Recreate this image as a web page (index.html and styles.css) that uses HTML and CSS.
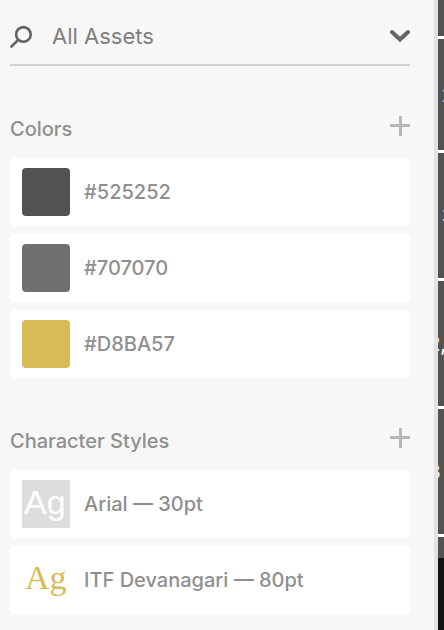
FILE: index.html
```html
<!DOCTYPE html>
<html lang="en">
<head>
<meta charset="utf-8">
<meta name="viewport" content="width=device-width, initial-scale=1">
<title>Assets</title>
<link rel="stylesheet" href="styles.css">
</head>
<body>
<div class="app">
  <aside class="panel">
    <div class="search">
      <svg class="search-icon" viewBox="0 0 24 24" aria-hidden="true"><circle cx="13.400" cy="10.400" r="7.300"/><path d="M8.200 15.800L1.500 22.500"/></svg>
      <input class="search-input" type="text" placeholder="All Assets" aria-label="Search assets">
      <button class="icon-button" type="button" aria-label="Filter assets"><svg class="chevron" viewBox="0 0 20 20" aria-hidden="true"><path d="M2 6L10 13.500L18 6"/></svg></button>
    </div>
    <section class="group">
      <header class="group-head">
        <h2 class="group-title">Colors</h2>
        <button class="icon-button" type="button" aria-label="Add color"><svg class="plus" viewBox="0 0 20 20" aria-hidden="true"><path d="M1 9.500H19M10.500 1V19"/></svg></button>
      </header>
      <ul class="list">
        <li class="item"><span class="swatch dark"></span><span>#525252</span></li>
        <li class="item"><span class="swatch gray"></span><span>#707070</span></li>
        <li class="item"><span class="swatch gold"></span><span>#D8BA57</span></li>
      </ul>
    </section>
    <section class="group">
      <header class="group-head">
        <h2 class="group-title">Character Styles</h2>
        <button class="icon-button" type="button" aria-label="Add character style"><svg class="plus" viewBox="0 0 20 20" aria-hidden="true"><path d="M1 9.500H19M10.500 1V19"/></svg></button>
      </header>
      <ul class="list">
        <li class="item"><span class="sample sans">Ag</span><span>Arial — 30pt</span></li>
        <li class="item"><span class="sample serif">Ag</span><span>ITF Devanagari — 80pt</span></li>
      </ul>
    </section>
  </aside>
  <main class="canvas">
    <div class="row first"></div>
    <div class="row second"><span class="edge">2</span></div>
    <div class="row"><span class="edge">3</span></div>
    <div class="row"><span class="cut">2,</span></div>
    <div class="row"><span class="cut">3</span></div>
    <div class="row last"></div>
  </main>
</div>
</body>
</html>
```
FILE: styles.css
```css
* { box-sizing: border-box; }

body {
  margin: 0;
  background: #111213;
  color: #8f8f8f;
  font: 500 20px/28px Inter, "Liberation Sans", sans-serif;
}

.app {
  display: flex;
  min-height: 100vh;
}

.panel {
  flex: 1;
  min-width: 0;
  padding: 8px 24px 16px 10px;
  background: #f7f7f7;
  border-right: 4px solid #e2e2e2;
}

.search {
  display: flex;
  align-items: center;
  height: 58px;
  border-bottom: 2px solid #d3d3d3;
}

.search-icon {
  width: 24px;
  height: 24px;
  margin-right: 18px;
  fill: none;
  stroke: #626262;
  stroke-width: 2.6;
  stroke-linecap: round;
}

.search-input {
  flex: 1;
  min-width: 0;
  padding: 0;
  border: 0;
  outline: 0;
  background: none;
  color: #808080;
  font: 22px/28px Inter, "Liberation Sans", sans-serif;
}

.search-input::placeholder {
  color: #808080;
  opacity: 1;
}

.icon-button {
  display: block;
  width: 20px;
  height: 20px;
  padding: 0;
  border: 0;
  background: none;
}

.icon-button svg {
  display: block;
  width: 20px;
  height: 20px;
  fill: none;
  stroke-linecap: round;
}

.chevron {
  stroke: #666;
  stroke-width: 4;
}

.plus {
  stroke: #b7b7b7;
  stroke-width: 3;
}

.group { margin-top: 48px; }

.group-head {
  display: flex;
  justify-content: space-between;
  height: 44px;
  padding-top: 2px;
}

.group-title {
  margin: 0;
  font-size: 20px;
  font-weight: 500;
  line-height: 26px;
}

.list {
  display: grid;
  gap: 8px;
  margin: 0;
  padding: 0;
  list-style: none;
}

.item {
  display: flex;
  align-items: center;
  gap: 14px;
  padding: 10px 12px;
  border-radius: 4px;
  background: #fff;
}

.swatch,
.sample {
  flex: none;
  width: 48px;
  height: 48px;
}

.swatch { border-radius: 4px; }
.dark { background: #525252; }
.gray { background: #707070; }
.gold { background: #d8ba57; }

.sample {
  font-size: 34px;
  font-weight: 400;
  line-height: 44px;
}

.sans {
  padding-left: 2px;
  background: #ddd;
  color: #fff;
  font-family: "Liberation Sans", sans-serif;
}

.serif {
  padding-left: 3px;
  color: #d8ba57;
  font-family: "Liberation Serif", serif;
}

.canvas {
  width: 6px;
  overflow: hidden;
}

.row {
  display: flex;
  align-items: center;
  height: 128px;
  overflow: hidden;
  border-bottom: 3px solid #fff;
  background: #525353;
  color: #fff;
}

.first { height: 39px; }
.second { height: 114px; }

.last {
  height: 21px;
  border: 0;
}

.edge { margin-left: 4px; }
.cut { margin-left: -10px; }
```
